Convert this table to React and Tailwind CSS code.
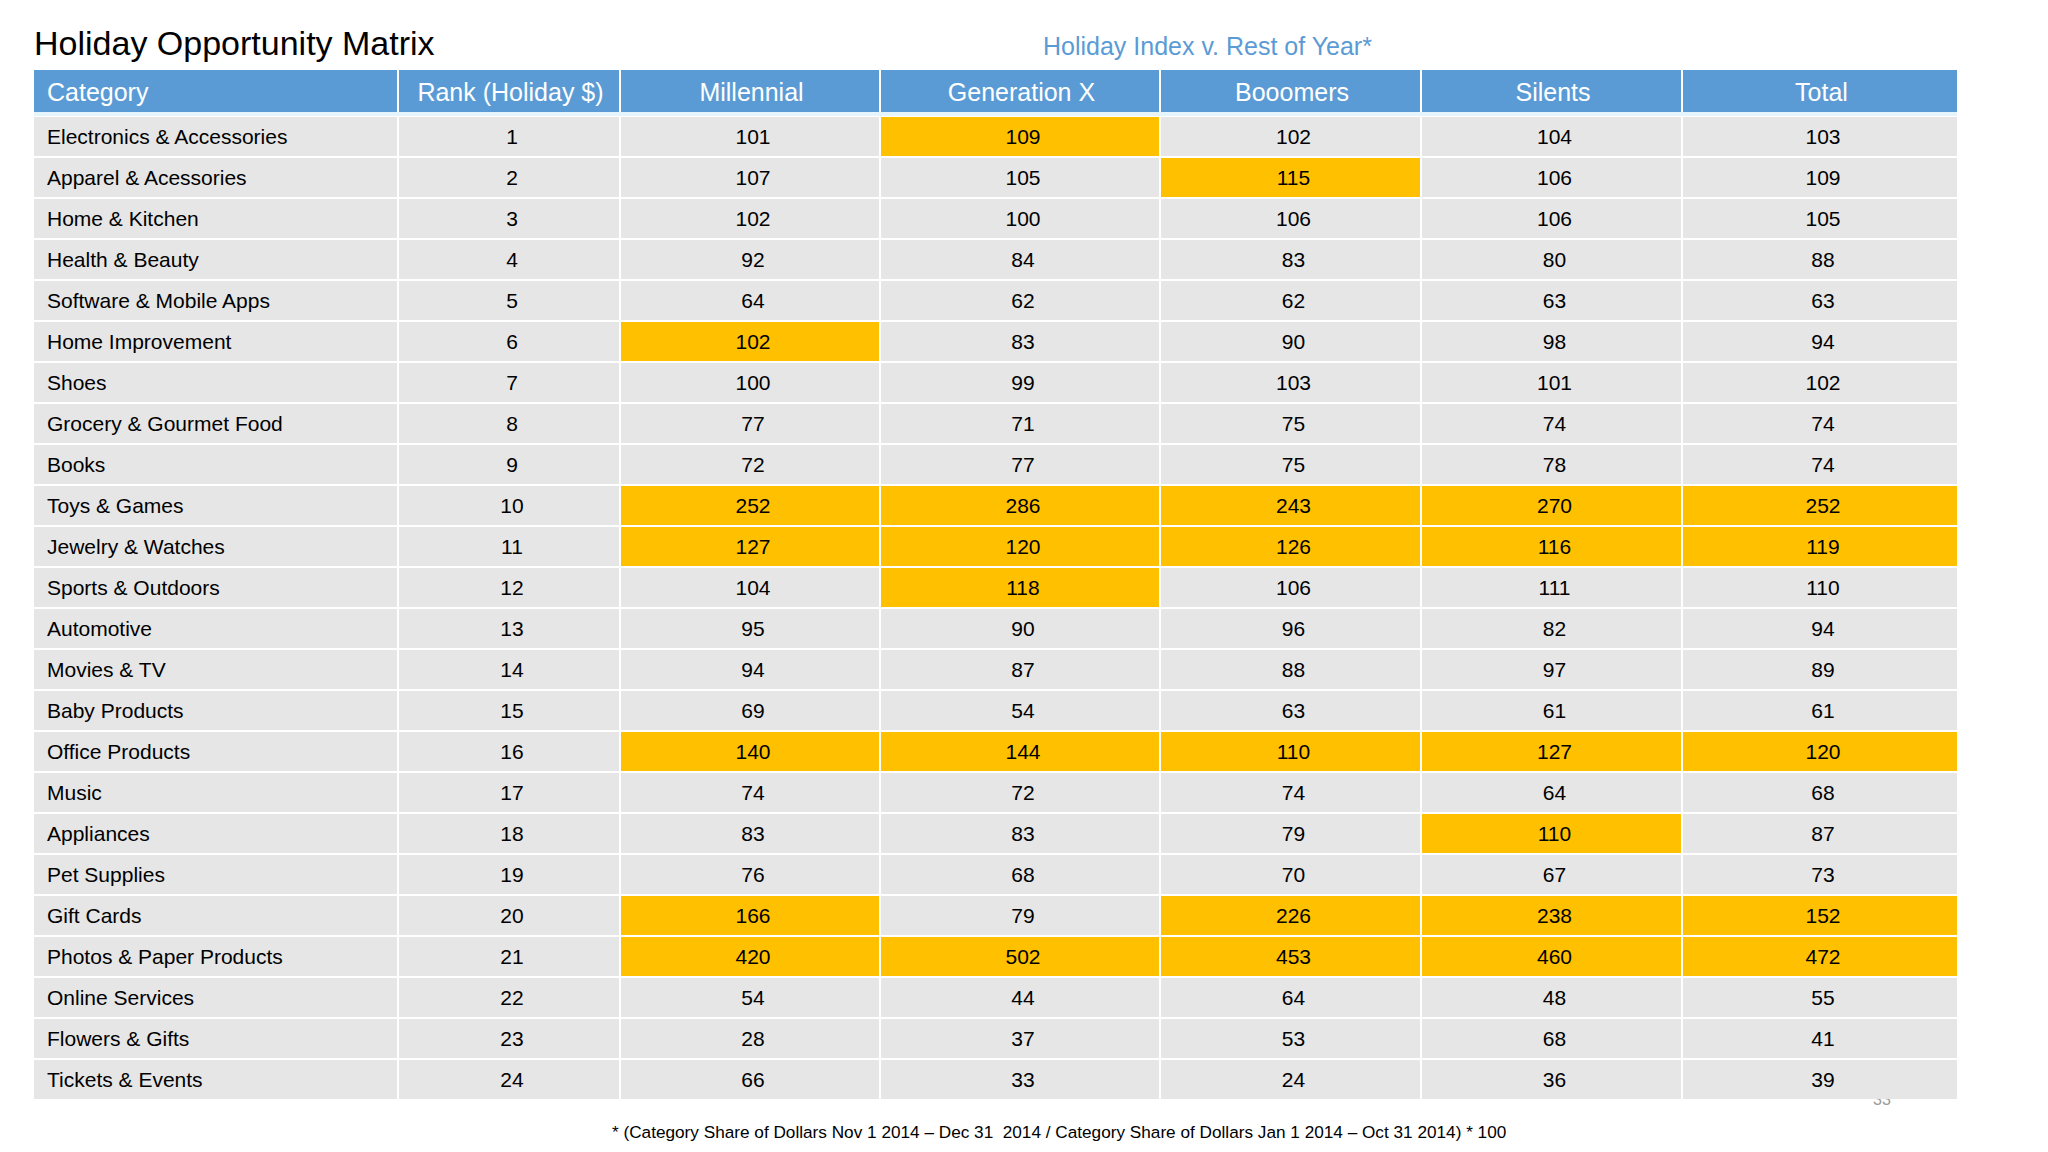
const COLUMNS = ['Category', 'Rank (Holiday $)', 'Millennial', 'Generation X', 'Booomers', 'Silents', 'Total'];

// [category, rank, millennial, genX, boomers, silents, total]; "!" marks a highlighted cell
const ROWS = [
  ['Electronics & Accessories', '1', '101', '109!', '102', '104', '103'],
  ['Apparel & Acessories', '2', '107', '105', '115!', '106', '109'],
  ['Home & Kitchen', '3', '102', '100', '106', '106', '105'],
  ['Health & Beauty', '4', '92', '84', '83', '80', '88'],
  ['Software & Mobile Apps', '5', '64', '62', '62', '63', '63'],
  ['Home Improvement', '6', '102!', '83', '90', '98', '94'],
  ['Shoes', '7', '100', '99', '103', '101', '102'],
  ['Grocery & Gourmet Food', '8', '77', '71', '75', '74', '74'],
  ['Books', '9', '72', '77', '75', '78', '74'],
  ['Toys & Games', '10', '252!', '286!', '243!', '270!', '252!'],
  ['Jewelry & Watches', '11', '127!', '120!', '126!', '116!', '119!'],
  ['Sports & Outdoors', '12', '104', '118!', '106', '111', '110'],
  ['Automotive', '13', '95', '90', '96', '82', '94'],
  ['Movies & TV', '14', '94', '87', '88', '97', '89'],
  ['Baby Products', '15', '69', '54', '63', '61', '61'],
  ['Office Products', '16', '140!', '144!', '110!', '127!', '120!'],
  ['Music', '17', '74', '72', '74', '64', '68'],
  ['Appliances', '18', '83', '83', '79', '110!', '87'],
  ['Pet Supplies', '19', '76', '68', '70', '67', '73'],
  ['Gift Cards', '20', '166!', '79', '226!', '238!', '152!'],
  ['Photos & Paper Products', '21', '420!', '502!', '453!', '460!', '472!'],
  ['Online Services', '22', '54', '44', '64', '48', '55'],
  ['Flowers & Gifts', '23', '28', '37', '53', '68', '41'],
  ['Tickets & Events', '24', '66', '33', '24', '36', '39'],
];

const GRID = 'grid grid-cols-[363px_220px_258px_278px_259px_259px_274px] gap-x-[2px]';

function Cell({ value, first }) {
  const hot = value.endsWith('!');
  const text = hot ? value.slice(0, -1) : value;
  return (
    <div
      className={`flex h-[39px] items-center text-[21px] text-black ${first ? 'justify-start pl-[13px]' : 'justify-center pl-[6px]'} ${hot ? 'bg-[#ffc000]' : 'bg-[#e6e6e6]'}`}
    >
      {text}
    </div>
  );
}

export default function App() {
  return (
    <div className="relative h-[1152px] w-[2048px] overflow-hidden bg-white font-['Liberation_Sans',Arial,sans-serif]">
      {/* page number, mostly hidden under the table */}
      <span className="absolute left-[1873px] top-[1092px] z-0 text-[16px] leading-[16px] text-[#9a9a9a]">33</span>

      <div className="relative z-10 pl-[34px]">
        <div className="mt-[26px] flex h-[34px] items-baseline leading-[34px]">
          <h1 className="w-[1009px] text-[34px] font-normal text-black">Holiday Opportunity Matrix</h1>
          <span className="text-[25px] text-[#5b9bd5]">Holiday Index v. Rest of Year*</span>
        </div>

        <div className="mt-[10px] w-[1923px] bg-white">
          <div className={GRID}>
            {COLUMNS.map((c, i) => (
              <div
                key={c}
                className={`flex h-[42px] items-center bg-[#5b9bd5] pt-[4px] text-[25px] text-white ${i === 0 ? 'justify-start pl-[13px]' : 'justify-center pl-[3px]'}`}
              >
                {c}
              </div>
            ))}
          </div>
          <div className="h-[4px] bg-[#e6f4fc]" />
          <div className="mt-[1px] flex flex-col gap-y-[2px]">
            {ROWS.map((row) => (
              <div key={row[0]} className={GRID}>
                {row.map((v, i) => (
                  <Cell key={i} value={v} first={i === 0} />
                ))}
              </div>
            ))}
          </div>
        </div>
      </div>

      <p className="relative z-10 mt-[23px] pl-[612px] text-[17.2px] leading-[20px] text-black">
        * (Category Share of Dollars Nov 1 2014 – Dec 31&nbsp; 2014 / Category Share of Dollars Jan 1 2014 – Oct 31 2014) * 100
      </p>
    </div>
  );
}
